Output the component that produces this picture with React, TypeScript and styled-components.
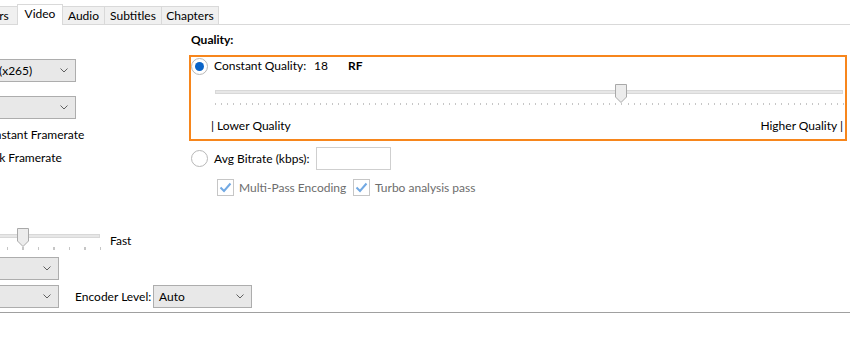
import styled, { createGlobalStyle } from "styled-components";

const GlobalStyle = createGlobalStyle`
	html, body {
		margin: 0;
		padding: 0;
		background: #fff;
	}
	body {
		font-family: Lato, "Noto Sans", sans-serif;
		font-size: 12px;
		color: #000;
	}
`;

const Page = styled.div`
	width: 850px;
	height: 343px;
	overflow: hidden;
	background: #fff;
	display: flex;
	flex-direction: column;
`;

const TabStrip = styled.div`
	height: 25px;
	box-sizing: border-box;
	border-bottom: 1px solid #d9d9d9;
	display: flex;
	align-items: flex-end;
	margin-left: -33px;
`;

const Tab = styled.div<{ $w: number; $active?: boolean }>`
	box-sizing: border-box;
	width: ${(p) => p.$w}px;
	height: ${(p) => (p.$active ? 21 : 18)}px;
	margin-right: -1px;
	margin-bottom: ${(p) => (p.$active ? -1 : 0)}px;
	border: 1px solid #d9d9d9;
	border-bottom: none;
	background: ${(p) => (p.$active ? "#fff" : "#f0f0f0")};
	position: relative;
	z-index: ${(p) => (p.$active ? 2 : 1)};
	display: flex;
	align-items: center;
	justify-content: center;
	padding-bottom: ${(p) => (p.$active ? 3 : 0)}px;
	white-space: nowrap;
	line-height: 14px;
`;

const TopSection = styled.div`
	display: flex;
	align-items: flex-start;
`;

const LeftColumn = styled.div`
	width: 304px;
	margin-left: -115px;
	flex: none;
	display: flex;
	flex-direction: column;
`;

const RightColumn = styled.div`
	width: 658px;
	flex: none;
	display: flex;
	flex-direction: column;
`;

const Combo = styled.div<{ $w: number; $ml?: number; $mt?: number }>`
	box-sizing: border-box;
	width: ${(p) => p.$w}px;
	height: 23px;
	margin-left: ${(p) => p.$ml ?? 0}px;
	margin-top: ${(p) => p.$mt ?? 0}px;
	border: 1px solid #adadad;
	background: #e8e8e8;
	display: flex;
	align-items: center;
	justify-content: space-between;
	padding: 0 7px 0 5px;
	white-space: nowrap;
	flex: none;
`;

const Chevron = () => (
	<svg width="8" height="5" viewBox="0 0 8 5">
		<polyline points="0.5,0.5 4,4 7.5,0.5" fill="none" stroke="#606060" strokeWidth="1" />
	</svg>
);

const RadioRow = styled.div<{ $ml?: number; $mt?: number; $h?: number }>`
	display: flex;
	align-items: center;
	height: ${(p) => p.$h ?? 16}px;
	margin-left: ${(p) => p.$ml ?? 0}px;
	margin-top: ${(p) => p.$mt ?? 0}px;
	gap: 6px;
	white-space: nowrap;
`;

const RadioCircle = styled.span<{ $on?: boolean }>`
	box-sizing: border-box;
	width: 17px;
	height: 17px;
	border-radius: 50%;
	border: 1px solid #b8b8b8;
	background: #fff;
	display: flex;
	align-items: center;
	justify-content: center;
	flex: none;
	&::after {
		content: "";
		width: 9px;
		height: 9px;
		border-radius: 50%;
		background: ${(p) => (p.$on ? "#0a64c8" : "transparent")};
	}
`;

const Label = styled.span<{ $w?: number; $bold?: boolean; $gray?: boolean }>`
	display: inline-block;
	width: ${(p) => (p.$w ? `${p.$w}px` : "auto")};
	font-weight: ${(p) => (p.$bold ? 700 : 400)};
	color: ${(p) => (p.$gray ? "#6d6d6d" : "#000")};
	line-height: 16px;
	white-space: nowrap;
	flex: none;
`;

const SectionTitle = styled.div`
	font-weight: 700;
	line-height: 16px;
	margin-top: 7px;
	margin-left: 2px;
`;

const QualityBox = styled.div`
	box-sizing: border-box;
	margin-top: 7px;
	width: 658px;
	height: 86px;
	border: 2px solid #f7861c;
	display: flex;
	flex-direction: column;
`;

const SliderWrap = styled.div<{ $w: number; $ml?: number; $mt?: number }>`
	position: relative;
	width: ${(p) => p.$w}px;
	height: 24px;
	margin-left: ${(p) => p.$ml ?? 0}px;
	margin-top: ${(p) => p.$mt ?? 0}px;
	flex: none;
`;

const Track = styled.div`
	box-sizing: border-box;
	margin-top: 7px;
	height: 4px;
	background: #e7e7e7;
	border: 1px solid #d8d8d8;
`;

const Ticks = styled.div<{ $step: number; $h: number }>`
	margin-top: 9px;
	height: ${(p) => p.$h}px;
	width: calc(100% + 1px);
	background-image: repeating-linear-gradient(
		to right,
		#c6c6c6 0 1px,
		transparent 1px ${(p) => p.$step}px
	);
`;

const Thumb = styled.svg`
	position: absolute;
	top: 1px;
	margin-left: -6px;
`;

const Slider = ({ w, value, step, tickH, ml, mt }: { w: number; value: number; step: number; tickH: number; ml?: number; mt?: number }) => (
	<SliderWrap $w={w} $ml={ml} $mt={mt}>
		<Track />
		<Ticks $step={step} $h={tickH} />
		<Thumb width="12" height="19" viewBox="0 0 12 19" style={{ left: value * w }}>
			<path d="M0.5 0.5 H11.5 V13 L6 18.5 L0.5 13 Z" fill="#ececec" stroke="#a9a9a9" />
		</Thumb>
	</SliderWrap>
);

const ScaleRow = styled.div`
	display: flex;
	justify-content: space-between;
	margin: 11px 2px 0 20px;
`;

const TextBox = styled.div`
	box-sizing: border-box;
	width: 75px;
	height: 23px;
	border: 1px solid #cfcfcf;
	background: #fff;
`;

const CheckRow = styled.div`
	display: flex;
	align-items: center;
	height: 17px;
	margin-top: 9px;
	margin-left: 28px;
`;

const CheckItem = styled.div<{ $w?: number }>`
	display: flex;
	align-items: center;
	gap: 5px;
	width: ${(p) => (p.$w ? `${p.$w}px` : "auto")};
`;

const CheckBox = styled.span`
	box-sizing: border-box;
	width: 17px;
	height: 17px;
	border: 1px solid #c6c6c6;
	background: #fff;
	display: flex;
	align-items: center;
	justify-content: center;
	flex: none;
`;

const Check = () => (
	<CheckBox>
		<svg width="13" height="11" viewBox="0 0 13 11">
			<polyline points="1.5,5.5 5,9 11.5,1.5" fill="none" stroke="#72a9e3" strokeWidth="2" />
		</svg>
	</CheckBox>
);

const BottomSection = styled.div`
	margin-left: -115px;
	display: flex;
	flex-direction: column;
	margin-top: 31px;
`;

const SpeedRow = styled.div`
	display: flex;
	align-items: flex-start;
	gap: 10px;
	margin-left: 60px;
`;

const FastLabel = styled.span`
	line-height: 16px;
	margin-top: 6px;
`;

const LevelRow = styled.div`
	display: flex;
	align-items: center;
	margin-top: 5px;
`;

const LevelLabel = styled(Label)`
	margin-left: 16px;
`;

const Separator = styled.div`
	margin-top: 4px;
	height: 1px;
	background: #a0a0a0;
	width: 850px;
	flex: none;
`;

const tabs = [
	{ name: "Filters", w: 51 },
	{ name: "Video", w: 46, active: true },
	{ name: "Audio", w: 43 },
	{ name: "Subtitles", w: 58 },
	{ name: "Chapters", w: 58 },
];

const rf = 18;

export default function App() {
	return (
		<>
			<GlobalStyle />
			<Page>
				<TabStrip>
					{tabs.map((t) => (
						<Tab key={t.name} $w={t.w} $active={t.active}>
							{t.name}
						</Tab>
					))}
				</TabStrip>

				<TopSection>
					<LeftColumn>
						<Combo $w={119} $ml={72} $mt={34}>
							<span>H.265 (x265)</span>
							<Chevron />
						</Combo>
						<Combo $w={191} $mt={14}>
							<span>Same as source</span>
							<Chevron />
						</Combo>
						<RadioRow $ml={72} $mt={8}>
							<RadioCircle />
							<Label>Constant Framerate</Label>
						</RadioRow>
						<RadioRow $ml={72} $mt={7}>
							<RadioCircle $on />
							<Label>Peak Framerate</Label>
						</RadioRow>
					</LeftColumn>

					<RightColumn>
						<SectionTitle>Quality:</SectionTitle>
						<QualityBox>
							<RadioRow $h={18}>
								<RadioCircle $on />
								<Label $w={94}>Constant Quality:</Label>
								<Label $w={28}>{rf}</Label>
								<Label $bold>RF</Label>
							</RadioRow>
							<Slider w={628} value={(51 - rf) / 51} step={6.157} tickH={2} ml={24} mt={8} />
							<ScaleRow>
								<Label>| Lower Quality</Label>
								<Label>Higher Quality |</Label>
							</ScaleRow>
						</QualityBox>
						<RadioRow $h={23} $ml={2} $mt={6}>
							<RadioCircle />
							<Label $w={96}>Avg Bitrate (kbps):</Label>
							<TextBox />
						</RadioRow>
						<CheckRow>
							<CheckItem $w={136}>
								<Check />
								<Label $gray>Multi-Pass Encoding</Label>
							</CheckItem>
							<CheckItem>
								<Check />
								<Label $gray>Turbo analysis pass</Label>
							</CheckItem>
						</CheckRow>
					</RightColumn>
				</TopSection>

				<BottomSection>
					<SpeedRow>
						<Slider w={155} value={0.5} step={15.5} tickH={3} />
						<FastLabel>Fast</FastLabel>
					</SpeedRow>
					<Combo $w={174} $mt={6}>
						<span>main</span>
						<Chevron />
					</Combo>
					<LevelRow>
						<Combo $w={174}>
							<span>None</span>
							<Chevron />
						</Combo>
						<LevelLabel $w={78}>Encoder Level:</LevelLabel>
						<Combo $w={99}>
							<span>Auto</span>
							<Chevron />
						</Combo>
					</LevelRow>
				</BottomSection>
				<Separator />
			</Page>
		</>
	);
}
